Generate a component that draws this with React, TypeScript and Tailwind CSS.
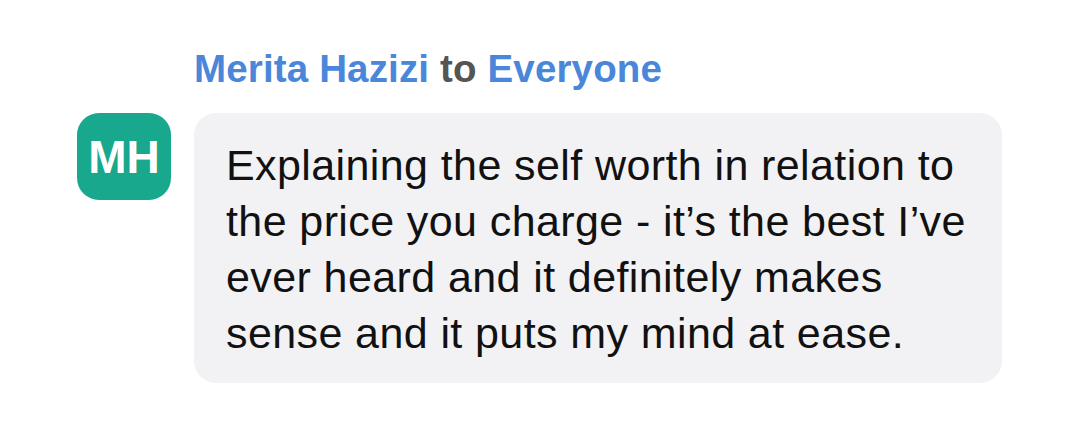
export default function App() {
  return (
    <div className="w-[1080px] h-[430px] bg-white font-['Liberation_Sans',Arial,sans-serif] pt-[46px] pl-[77px]">
      <div className="grid grid-cols-[94px_808px] gap-x-[23px] gap-y-[21px]">
        <div />
        <div className="text-[38.5px] leading-[46px] font-bold tracking-[0.15px]">
          <span className="text-[#4a86d9]">Merita Hazizi</span>{' '}
          <span className="text-[#555555]">to</span>{' '}
          <span className="text-[#4a86d9]">Everyone</span>
        </div>
        <div className="w-[94px] h-[87px] rounded-[22px] bg-[#17a88e] flex items-center justify-center text-white font-bold text-[46px] leading-none">
          MH
        </div>
        <div className="rounded-[22px] bg-[#f2f2f4] pl-[32px] pr-[10px] pt-[24px] pb-[22px] text-[43px] leading-[56px] tracking-[0.4px] text-[#111111]">
          Explaining the self worth in relation to
          <br />
          the price you charge - it’s the best I’ve
          <br />
          ever heard and it definitely makes
          <br />
          sense and it puts my mind at ease.
        </div>
      </div>
    </div>
  );
}
